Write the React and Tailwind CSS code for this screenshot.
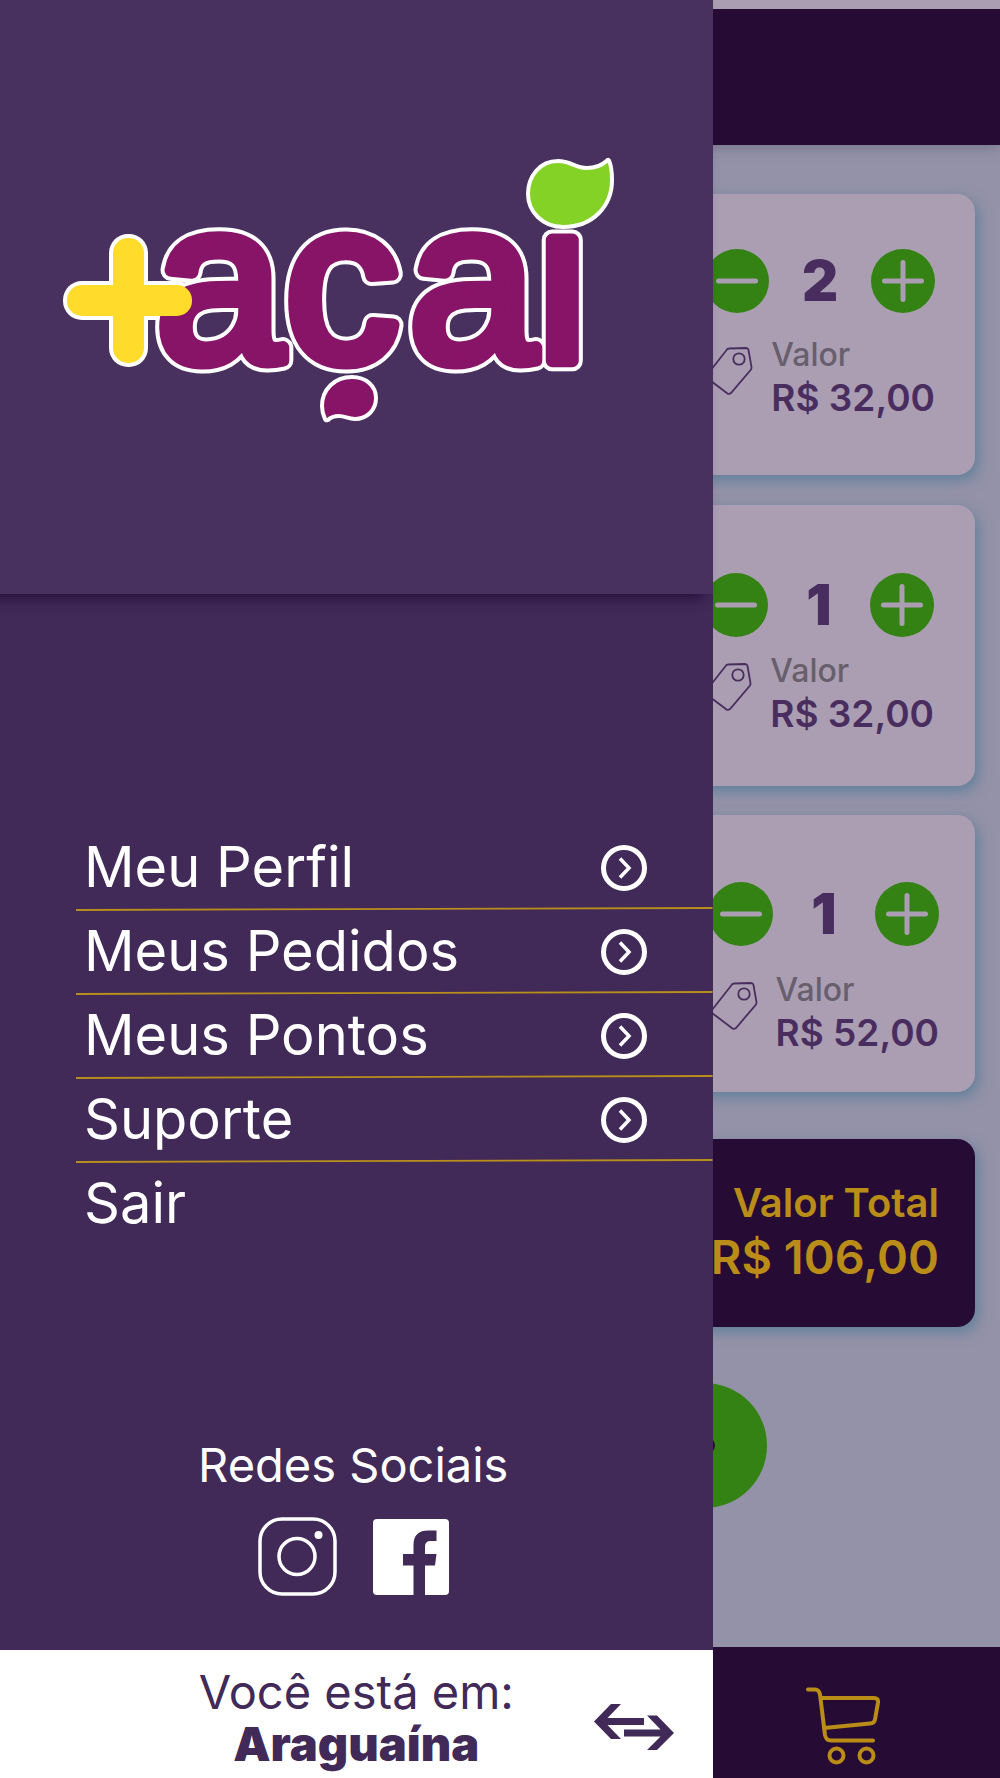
import { useState } from 'react';

const menuItems = [
  { label: 'Meu Perfil', arrow: true },
  { label: 'Meus Pedidos', arrow: true },
  { label: 'Meus Pontos', arrow: true },
  { label: 'Suporte', arrow: true },
  { label: 'Sair', arrow: false },
];

const initialItems = [
  { id: 1, qty: 2, price: 'R$ 32,00', card: 'mt-[49px] pt-[55px] pb-[54px] pr-10', value: 'mt-[22px]' },
  { id: 2, qty: 1, price: 'R$ 32,00', card: 'mt-[30px] pt-[68px] pb-[49px] pr-[41px]', value: 'mt-[14px]' },
  { id: 3, qty: 1, price: 'R$ 52,00', card: 'mt-[29px] pt-[67px] pb-[36px] pr-[36px]', value: 'mt-[24px]' },
];

// letras da marca: a cedilha e o pingo do i são as folhas
const letters = [
  { char: 'a', x: 156 },
  { char: 'c', x: 285 },
  { char: 'a', x: 409 },
  { char: 'i', x: 537 },
];

function Logo() {
  return (
    <svg viewBox="60 156 556 268" className="w-[556px] max-w-full" role="img" aria-label="+açai">
      <g fill="#fff">
        <rect x="109" y="234" width="39" height="133" rx="19" />
        <rect x="63" y="281" width="133" height="39" rx="19" />
      </g>
      <g fontFamily="'Liberation Sans', Arial, sans-serif" fontSize="228" strokeLinejoin="round">
        <text y="361" fill="#fff" stroke="#fff" strokeWidth="21" aria-hidden="true">
          {letters.map(l => <tspan key={l.x} x={l.x}>{l.char}</tspan>)}
        </text>
        <text y="361" fill="#881467" stroke="#881467" strokeWidth="13">
          {letters.map(l => <tspan key={l.x} x={l.x}>{l.char}</tspan>)}
        </text>
      </g>
      <g fill="#ffdb2b">
        <rect x="113" y="238" width="31" height="125" rx="15" />
        <rect x="67" y="285" width="125" height="31" rx="15" />
      </g>
      <path
        d="M558 161C540 161 528 176 528 194C528 212 543 227 563 227C593 227 612 206 612 180C612 172 611 165 609 160.500Q608 159 606.500 161C601 166 595 168 587 168C575 168 571 161 558 161Z"
        fill="#85d226"
        stroke="#fff"
        strokeWidth="4"
      />
      <path
        d="M352 377C366 377 376 386 376 398C376 410 367 419 355 419C348 419 345 416 339 416C334 416 331 417 328 420Q326 421 325 419C323 415 322 411 322 406C322 390 334 377 352 377Z"
        fill="#881467"
        stroke="#fff"
        strokeWidth="4"
      />
    </svg>
  );
}

function QtyIcon({ plus }) {
  return (
    <svg viewBox="0 0 64 64" className="size-16" aria-hidden="true">
      <circle cx="32" cy="32" r="32" fill="#348214" />
      <path d={plus ? 'M13.500 32h37M32 13.500v37' : 'M13.500 32h37'} stroke="#ab9eb3" strokeWidth="5" strokeLinecap="round" />
    </svg>
  );
}

function TagIcon() {
  return (
    <svg viewBox="0 0 48 48" className="mt-3 size-12 shrink-0" fill="none" stroke="#4a2d5f" strokeWidth="1.800" aria-hidden="true">
      <path d="M22 2.500Q23 1.500 24 1.500L41 1Q43 1 43.500 3L46.500 20Q46.500 21.500 46 22.500L26 46Q24 47.500 22.500 46.500L2 31Q1 29.500 2 28Z" />
      <circle cx="34" cy="12" r="5.700" />
    </svg>
  );
}

function CartIcon() {
  return (
    <svg viewBox="0 0 76 80" className="h-20 w-[76px]" fill="none" stroke="#b98d17" strokeWidth="4" strokeLinecap="round" strokeLinejoin="round" aria-hidden="true">
      <path d="M4 3.500h7q4 0 5 5L21 49q1 5.500 6 5.500h42" />
      <path d="M17 12h53q4.500 0 4 4.500l-3 17q-.7 4-5 4L20 42" />
      <circle cx="32.500" cy="69.500" r="7" />
      <circle cx="62.500" cy="69.500" r="7" />
    </svg>
  );
}

function CartItem({ item, onChange }) {
  return (
    <article className={`flex flex-col items-end rounded-[18px] bg-[#ab9eb3] shadow-[3px_5px_14px_#5f7f9a] ${item.card}`}>
      <div className="flex items-center">
        <button type="button" aria-label="Diminuir" onClick={() => onChange(item.id, -1)}>
          <QtyIcon />
        </button>
        <span className="w-[102px] text-center text-[56px] leading-[64px] font-black text-[#4a2d5f]">{item.qty}</span>
        <button type="button" aria-label="Aumentar" onClick={() => onChange(item.id, 1)}>
          <QtyIcon plus />
        </button>
      </div>
      <div className={`flex items-start gap-[18px] ${item.value}`}>
        <TagIcon />
        <dl>
          <dt className="text-[32px] leading-10 font-medium text-[#675f6c]">Valor</dt>
          <dd className="text-[37px] leading-[46px] font-semibold text-[#4a2d5f]">{item.price}</dd>
        </dl>
      </div>
    </article>
  );
}

export default function App() {
  const [items, setItems] = useState(initialItems);

  const handleChange = (id, step) => {
    setItems(prev => prev.map(item => (item.id === id ? { ...item, qty: Math.max(0, item.qty + step) } : item)));
  };

  return (
    <div className="relative flex min-h-screen flex-col overflow-hidden bg-[#9492a8] font-[Inter,sans-serif]">
      {/* --- CARRINHO (atrás do menu) --- */}
      <header className="h-[145px] border-t-[9px] border-[#ab9eb3] bg-[#260c35] shadow-[0_3px_12px_#77768c]" />
      <main className="flex flex-col px-[25px]">
        {items.map(item => (
          <CartItem key={item.id} item={item} onChange={handleChange} />
        ))}
        <section className="mt-[47px] rounded-[18px] bg-[#260c35] pt-[37px] pr-[36px] pb-[43px] text-right text-[#b98d17] shadow-[3px_5px_14px_#5f7f9a]">
          <h2 className="text-[40px] leading-[54px] font-semibold">Valor Total</h2>
          <p className="text-[47px] leading-[54px] font-semibold">R$ 106,00</p>
        </section>
        <button type="button" aria-label="Finalizar" className="mt-14 mr-[208px] self-end">
          <svg viewBox="0 0 125 125" className="size-[125px]" aria-hidden="true">
            <circle cx="62.500" cy="62.500" r="62.500" fill="#348214" />
            <path d="M30 62.500h35" stroke="#260c35" strokeWidth="16" strokeLinecap="round" />
          </svg>
        </button>
      </main>
      <footer className="mt-auto flex justify-end bg-[#260c35] pt-[39px] pr-[120px] pb-3">
        <a href="#carrinho" aria-label="Carrinho">
          <CartIcon />
        </a>
      </footer>

      {/* --- MENU LATERAL --- */}
      <aside className="absolute inset-y-0 left-0 flex w-[71.25%] flex-col bg-[#412958]">
        <div className="bg-[#48305f] pt-[156px] pb-[170px] pl-[60px] shadow-[-10px_4px_12px_#25103a]">
          <Logo />
        </div>

        <nav className="mt-[232px] ml-[76px]">
          <ul>
            {menuItems.map(item => (
              <li key={item.label}>
                <a href="#menu" className="flex h-[82px] items-center justify-between pr-[65px] pl-2 text-[56px] text-white">
                  {item.label}
                  {item.arrow && (
                    <svg viewBox="0 0 48 48" className="size-12" fill="none" stroke="#fff" aria-hidden="true">
                      <circle cx="24" cy="25" r="20.500" strokeWidth="5" />
                      <path d="M20 15.500l9 9.500-9 9.500" strokeWidth="3.500" />
                    </svg>
                  )}
                </a>
                {item.arrow && (
                  <svg viewBox="0 0 637 4" preserveAspectRatio="none" className="-my-px h-1 w-full" aria-hidden="true">
                    <path d="M0 3L637 1" stroke="#b98f1c" strokeWidth="1.800" />
                  </svg>
                )}
              </li>
            ))}
          </ul>
        </nav>

        <section className="mt-[193px] flex flex-col items-center pr-1.5">
          <h2 className="text-[47px] leading-[56px] text-white">Redes Sociais</h2>
          <div className="mt-6 flex items-center gap-9">
            <a href="#instagram" aria-label="Instagram">
              <svg viewBox="0 0 79 79" className="size-[79px]" fill="none" stroke="#fff" aria-hidden="true">
                <rect x="2" y="2" width="75" height="75" rx="22" strokeWidth="3.500" />
                <circle cx="39" cy="39.500" r="18" strokeWidth="3.500" />
                <circle cx="60.500" cy="18" r="4" fill="#fff" stroke="none" />
              </svg>
            </a>
            <a href="#facebook" aria-label="Facebook">
              <svg viewBox="0 0 76 76" className="size-[76px]" aria-hidden="true">
                <rect width="76" height="76" rx="4" fill="#fff" />
                <path
                  d="M63.500 11.500v10.500h-6q-5.500 0-5.500 5.500V35h11.500L62 46.500H52V76H40.500V46.500H30V35h10.500V26C40.500 16 46 11.500 55 11.500Z"
                  fill="#412958"
                />
              </svg>
            </a>
          </div>
        </section>

        <div className="mt-auto grid grid-cols-[1fr_auto_1fr] bg-white pt-4 pb-2 text-center text-[#412958]">
          <p className="col-start-2 text-[47px] leading-[52px]">
            Você está em:
            <strong className="block font-black">Araguaína</strong>
          </p>
          <button type="button" aria-label="Trocar cidade" className="mt-[38px] mr-[39px] self-start justify-self-end">
            <svg viewBox="0 0 80 46" className="h-[46px] w-20" fill="#412958" aria-hidden="true">
              <path d="M0 17.500L17 0h10L13.500 14H50v7H13.500L27 35H17Z" />
              <path d="M80 29L63 46H53L66.500 32.500H30v-7h36.500L53 11.500h10Z" />
            </svg>
          </button>
        </div>
      </aside>
    </div>
  );
}
